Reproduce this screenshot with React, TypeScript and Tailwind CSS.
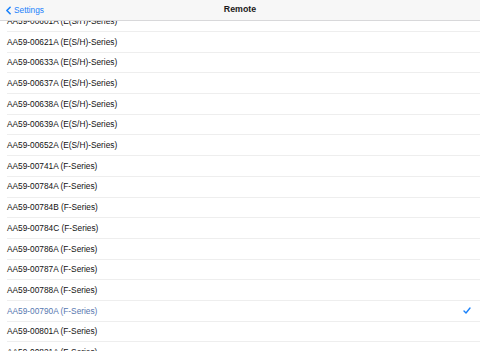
import { ChevronLeft } from 'lucide-react';

const remotes = [
  'AA59-00601A (E(S/H)-Series)',
  'AA59-00621A (E(S/H)-Series)',
  'AA59-00633A (E(S/H)-Series)',
  'AA59-00637A (E(S/H)-Series)',
  'AA59-00638A (E(S/H)-Series)',
  'AA59-00639A (E(S/H)-Series)',
  'AA59-00652A (E(S/H)-Series)',
  'AA59-00741A (F-Series)',
  'AA59-00784A (F-Series)',
  'AA59-00784B (F-Series)',
  'AA59-00784C (F-Series)',
  'AA59-00786A (F-Series)',
  'AA59-00787A (F-Series)',
  'AA59-00788A (F-Series)',
  'AA59-00790A (F-Series)',
  'AA59-00801A (F-Series)',
  'AA59-00821A (F-Series)',
];

const selected = 'AA59-00790A (F-Series)';

export default function App() {
  return (
    <div className="flex h-[351px] w-[480px] flex-col overflow-hidden bg-white font-['Liberation_Sans',Arial,sans-serif]">
      {/* Navigation bar */}
      <header className="relative z-10 flex h-[21px] shrink-0 items-center border-b border-[#d8d8da] bg-[#f7f7f7]">
        <button className="flex items-center pl-[2px] text-[8.3px] text-[#1a82fb]">
          <ChevronLeft className="h-[13px] w-[13px]" strokeWidth={3} />
          <span className="ml-[-1px]">Settings</span>
        </button>
        <h1 className="absolute left-1/2 -translate-x-1/2 text-[8.8px] font-semibold text-[#1a1a1a]">Remote</h1>
      </header>

      {/* Remote list */}
      <div className="flex-1 overflow-hidden">
        <ul className="mt-[-9.7px]">
          {remotes.map((name) => {
            const isSelected = name === selected;
            return (
              <li key={name} className="pl-[7px]">
                <div className="flex h-[20.7px] items-center justify-between border-b border-[#eeeeee] pr-[8px]">
                  <span className={`text-[8.3px] ${isSelected ? 'text-[#5677b0]' : 'text-[#111]'}`}>{name}</span>
                  {isSelected && (
                    <svg width="8" height="7" viewBox="0 0 8 7" fill="none" className="mr-[1px]">
                      <path d="M1 4l2 2 4-5" stroke="#1a82fb" strokeWidth="1.4" strokeLinecap="round" strokeLinejoin="round" />
                    </svg>
                  )}
                </div>
              </li>
            );
          })}
        </ul>
      </div>
    </div>
  );
}
